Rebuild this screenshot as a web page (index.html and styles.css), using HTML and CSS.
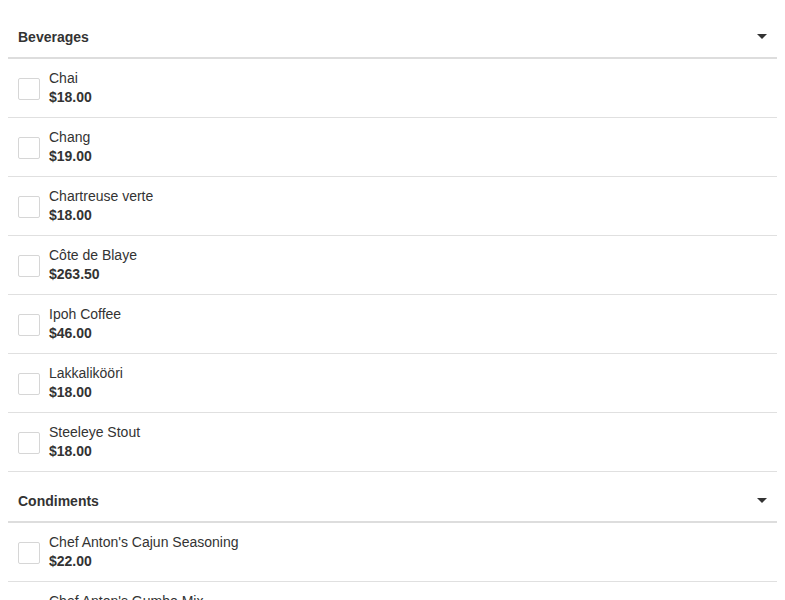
FILE: index.html
```
<!DOCTYPE html>
<html>
<head>
<meta charset="utf-8">
<link rel="stylesheet" href="styles.css">
</head>
<body>
<div class="list">
  <div class="group">
    <div class="group-header"><span class="group-title">Beverages</span><span class="caret"></span></div>
    <div class="item"><span class="check"></span><div class="info"><div class="name">Chai</div><div class="price">$18.00</div></div></div>
    <div class="item"><span class="check"></span><div class="info"><div class="name">Chang</div><div class="price">$19.00</div></div></div>
    <div class="item"><span class="check"></span><div class="info"><div class="name">Chartreuse verte</div><div class="price">$18.00</div></div></div>
    <div class="item"><span class="check"></span><div class="info"><div class="name">Côte de Blaye</div><div class="price">$263.50</div></div></div>
    <div class="item"><span class="check"></span><div class="info"><div class="name">Ipoh Coffee</div><div class="price">$46.00</div></div></div>
    <div class="item"><span class="check"></span><div class="info"><div class="name">Lakkalikööri</div><div class="price">$18.00</div></div></div>
    <div class="item"><span class="check"></span><div class="info"><div class="name">Steeleye Stout</div><div class="price">$18.00</div></div></div>
  </div>
  <div class="group">
    <div class="group-header"><span class="group-title">Condiments</span><span class="caret"></span></div>
    <div class="item"><span class="check"></span><div class="info"><div class="name">Chef Anton's Cajun Seasoning</div><div class="price">$22.00</div></div></div>
    <div class="item"><span class="check"></span><div class="info"><div class="name">Chef Anton's Gumbo Mix</div><div class="price">$21.35</div></div></div>
  </div>
</div>
</body>
</html>
```
FILE: styles.css
```
html, body { background: #fff; }
body {
  margin: 8px;
  font-family: "Liberation Sans", Arial, sans-serif;
  font-size: 14px;
  color: #333;
}
.group-header {
  display: flex;
  align-items: center;
  justify-content: space-between;
  padding: 20px 10px 11px 10px;
  line-height: 18px;
  border-bottom: 2px solid #ddd;
}
.group-title { font-weight: bold; }
.caret {
  width: 0; height: 0;
  border-left: 5px solid transparent;
  border-right: 5px solid transparent;
  border-top: 5px solid #333;
  margin-top: -1px;
}
.item {
  display: flex;
  align-items: center;
  padding: 10px 10px;
  border-bottom: 1px solid #e0e0e0;
}
.check {
  width: 20px; height: 20px;
  border: 1px solid #d6d6d6;
  border-radius: 2px;
  margin-top: 2px;
  margin-right: 9px;
  flex-shrink: 0;
}
.info { line-height: 19px; }
.price { font-weight: bold; }
```
